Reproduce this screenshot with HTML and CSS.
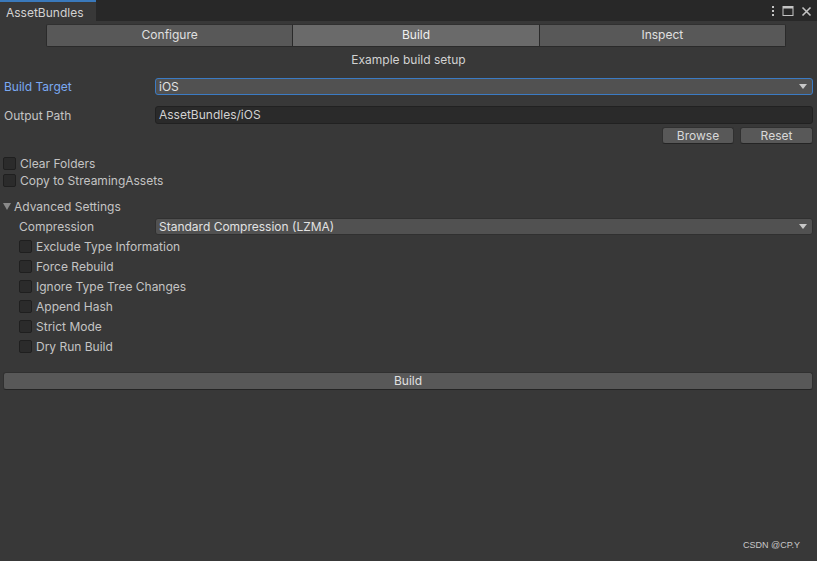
FILE: index.html
```html
<!DOCTYPE html>
<html>
<head>
<meta charset="utf-8">
<link rel="stylesheet" href="styles.css">
</head>
<body>
<div class="window">
  <div class="tabbar">
    <div class="tab">AssetBundles</div>
    <div class="spacer"></div>
    <div class="win-icons">
      <svg class="ico" width="4" height="12" viewBox="0 0 4 12"><rect x="1" y="1" width="2" height="2" fill="#c4c4c4"/><rect x="1" y="5" width="2" height="2" fill="#c4c4c4"/><rect x="1" y="9" width="2" height="2" fill="#c4c4c4"/></svg>
      <svg class="ico" width="12" height="12" viewBox="0 0 12 12"><rect x="1" y="1.5" width="10" height="9" fill="none" stroke="#c4c4c4" stroke-width="1"/><rect x="1" y="1" width="10" height="2.5" fill="#c4c4c4"/></svg>
      <svg class="ico" width="11" height="11" viewBox="0 0 11 11"><path d="M1.5 1.5 L9.5 9.5 M9.5 1.5 L1.5 9.5" stroke="#c4c4c4" stroke-width="1.6"/></svg>
    </div>
  </div>
  <div class="content">
    <div class="toolbar">
      <div class="tbtn">Configure</div>
      <div class="tbtn active">Build</div>
      <div class="tbtn">Inspect</div>
    </div>
    <div class="subtitle">Example build setup</div>
    <div class="row target">
      <div class="label focus">Build Target</div>
      <div class="dropdown focused"><span>iOS</span><span class="arrow"></span></div>
    </div>
    <div class="row output">
      <div class="label">Output Path</div>
      <div class="textfield">AssetBundles/iOS</div>
    </div>
    <div class="btnrow">
      <div class="btn browse">Browse</div>
      <div class="btn reset">Reset</div>
    </div>
    <div class="checks top">
      <div class="check"><span class="box"></span><span>Clear Folders</span></div>
      <div class="check"><span class="box"></span><span>Copy to StreamingAssets</span></div>
    </div>
    <div class="foldout"><span class="tri"></span><span>Advanced Settings</span></div>
    <div class="row compression">
      <div class="label indent">Compression</div>
      <div class="dropdown"><span>Standard Compression (LZMA)</span><span class="arrow"></span></div>
    </div>
    <div class="checks sub">
      <div class="check"><span class="box"></span><span>Exclude Type Information</span></div>
      <div class="check"><span class="box"></span><span>Force Rebuild</span></div>
      <div class="check"><span class="box"></span><span>Ignore Type Tree Changes</span></div>
      <div class="check"><span class="box"></span><span>Append Hash</span></div>
      <div class="check"><span class="box"></span><span>Strict Mode</span></div>
      <div class="check"><span class="box"></span><span>Dry Run Build</span></div>
    </div>
    <div class="buildbtn">Build</div>
  </div>
  <div class="watermark">CSDN @CP.Y</div>
</div>
</body>
</html>
```

FILE: styles.css
```css
* { box-sizing: border-box; }
html, body { margin: 0; padding: 0; }
body {
  background: #383838;
  font-family: Inter, "Noto Sans", sans-serif;
  font-size: 12px;
  color: #c4c4c4;
}
.window {
  position: relative;
  width: 817px;
  height: 561px;
  background: #383838;
  overflow: hidden;
}
.tabbar {
  display: flex;
  height: 21px;
  background: #282828;
  align-items: stretch;
}
.tab {
  width: 96px;
  background: #383838;
  border-top: 2px solid #3a79bb;
  padding-left: 6px;
  padding-top: 3px;
  line-height: 16px;
  color: #d2d2d2;
}
.spacer { flex: 1; }
.win-icons {
  display: flex;
  align-items: center;
  gap: 7px;
  padding-right: 5px;
  padding-top: 1px;
}
.content {
  display: flex;
  flex-direction: column;
  padding: 0 4px;
}
.toolbar {
  display: flex;
  margin: 3px 27px 0 42px;
  height: 23px;
}
.tbtn {
  flex: 1;
  background: #585858;
  border: 1px solid #2a2a2a;
  border-top-color: #303030;
  color: #e0e0e0;
  text-align: center;
  line-height: 20px;
  margin-right: -1px;
}
.tbtn:first-child { border-radius: 2px 0 0 2px; }
.tbtn:last-child { border-radius: 0 2px 2px 0; margin-right: 0; }
.tbtn.active { background: #6a6a6a; color: #f0f0f0; position: relative; z-index: 1; }
.subtitle {
  margin-top: 3px;
  height: 20px;
  line-height: 20px;
  text-align: center;
  color: #d2d2d2;
}
.row {
  display: flex;
  align-items: center;
}
.label {
  width: 151px;
  flex: none;
}
.label.focus { color: #7aa9f2; }
.label.indent { padding-left: 15px; }
.target { margin-top: 8px; height: 17px; }
.dropdown {
  flex: 1;
  height: 17px;
  background: #515151;
  border: 1px solid #303030;
  border-radius: 3px;
  display: flex;
  align-items: center;
  justify-content: space-between;
  padding: 0 5px 0 3px;
  color: #e2e2e2;
}
.dropdown.focused { border-color: #3b7bc4; }
.arrow {
  width: 0; height: 0;
  border-left: 4px solid transparent;
  border-right: 4px solid transparent;
  border-top: 5px solid #c8c8c8;
}
.output { margin-top: 11px; height: 18px; }
.textfield {
  flex: 1;
  height: 18px;
  background: #2a2a2a;
  border: 1px solid #212121;
  border-radius: 3px;
  padding-left: 3px;
  line-height: 16px;
  color: #d2d2d2;
}
.btnrow {
  display: flex;
  justify-content: flex-end;
  gap: 6px;
  margin-top: 3px;
  height: 17px;
}
.btn {
  height: 17px;
  background: #585858;
  border: 1px solid #303030;
  border-bottom-color: #242424;
  border-radius: 3px;
  text-align: center;
  line-height: 15px;
  color: #d8d8d8;
}
.browse { width: 72px; }
.reset { width: 73px; }
.checks { display: flex; flex-direction: column; }
.checks.top { margin-top: 11px; margin-left: -1px; }
.checks.top .check { height: 17px; }
.check {
  display: flex;
  align-items: center;
  gap: 4px;
}
.box {
  width: 13px;
  height: 13px;
  background: #2b2b2b;
  border: 1px solid #1f1f1f;
  border-radius: 2px;
  flex: none;
}
.foldout {
  margin-top: 8px;
  height: 18px;
  display: flex;
  align-items: center;
  gap: 3px;
  margin-left: -1px;
}
.tri {
  width: 0; height: 0;
  border-left: 4px solid transparent;
  border-right: 4px solid transparent;
  border-top: 7px solid #8a8a8a;
}
.compression { margin-top: 3px; height: 17px; }
.checks.sub { margin-top: 1px; padding-left: 15px; }
.checks.sub .check { height: 20px; }
.buildbtn {
  margin-top: 16px;
  height: 18px;
  background: #585858;
  border: 1px solid #303030;
  border-bottom-color: #242424;
  border-radius: 3px;
  text-align: center;
  line-height: 16px;
  color: #e0e0e0;
  margin-left: -1px;
}
.watermark {
  position: absolute;
  left: 743px;
  top: 540px;
  font-size: 9px;
  color: #c8c8c8;
  font-family: "Liberation Sans", Arial, sans-serif;
}
```
